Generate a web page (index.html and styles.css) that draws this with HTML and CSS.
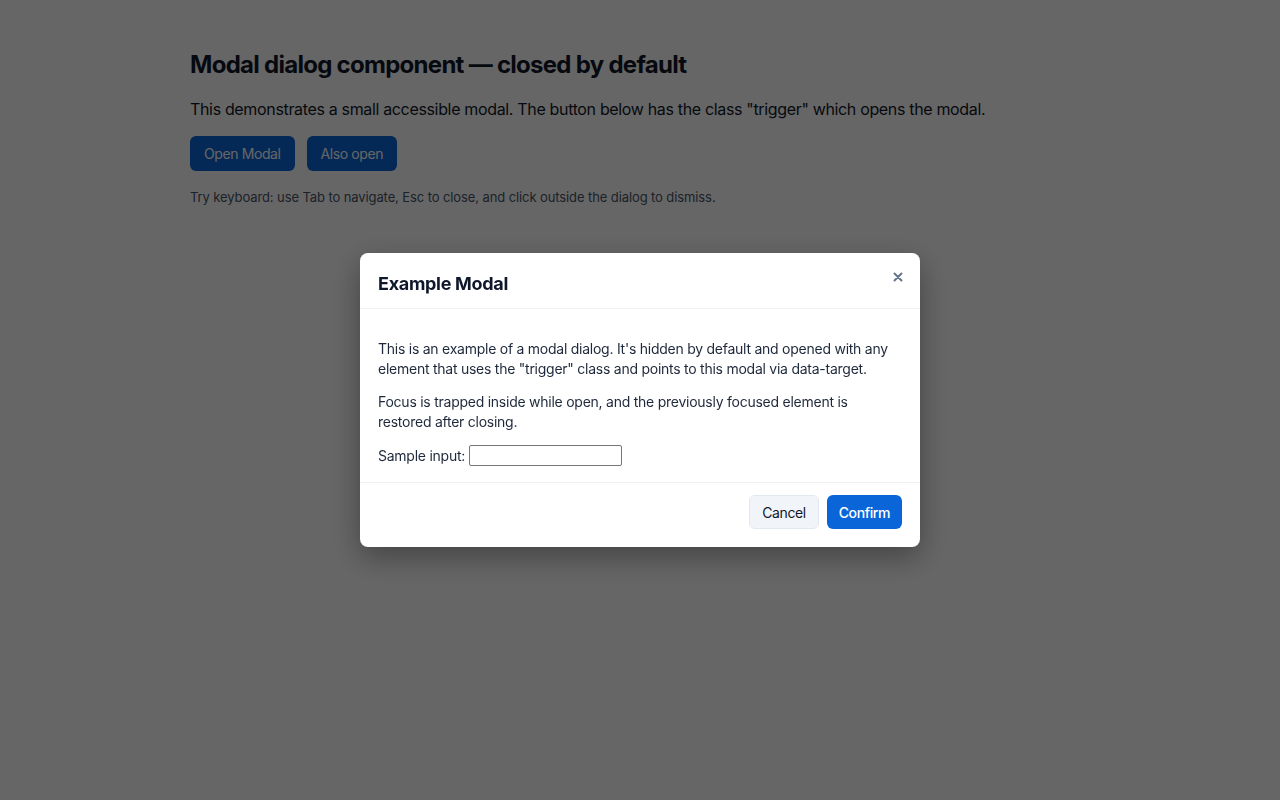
FILE: index.html
```html
<!DOCTYPE html>
<html lang="en">
<head>
<meta charset="utf-8">
<title>Modal dialog component</title>
<link rel="stylesheet" href="styles.css">
</head>
<body>
<main class="page">
  <h1 class="title">Modal dialog component — closed by default</h1>
  <p class="lead">This demonstrates a small accessible modal. The button below has the class "trigger" which opens the modal.</p>
  <div class="actions">
    <button class="btn btn-primary trigger" type="button">Open Modal</button>
    <button class="btn btn-primary trigger" type="button">Also open</button>
  </div>
  <p class="hint">Try keyboard: use Tab to navigate, Esc to close, and click outside the dialog to dismiss.</p>
</main>

<div class="overlay">
  <div class="modal" role="dialog" aria-modal="true" aria-labelledby="modal-title">
    <header class="modal-header">
      <h2 class="modal-title" id="modal-title">Example Modal</h2>
      <button class="close" type="button" aria-label="Close">
        <svg width="10" height="10" viewBox="0 0 10 10" aria-hidden="true"><path d="M1.5 1.5 L8.5 8.5 M8.5 1.5 L1.5 8.5" stroke="currentColor" stroke-width="2" stroke-linecap="round"/></svg>
      </button>
    </header>
    <div class="modal-body">
      <p>This is an example of a modal dialog. It's hidden by default and opened with any element that uses the "trigger" class and points to this modal via data-target.</p>
      <p>Focus is trapped inside while open, and the previously focused element is restored after closing.</p>
      <label class="field">Sample input: <input type="text" class="input"></label>
    </div>
    <footer class="modal-footer">
      <button class="btn btn-secondary" type="button">Cancel</button>
      <button class="btn btn-confirm" type="button">Confirm</button>
    </footer>
  </div>
</div>
</body>
</html>
```

FILE: styles.css
```css
html, body {
  margin: 0;
  padding: 0;
  height: 100%;
}

body {
  background: #ffffff;
  font-family: Inter, "Noto Sans", "Liberation Sans", sans-serif;
  color: #0f172a;
  letter-spacing: -0.02em;
}

.page {
  max-width: 900px;
  margin: 0 auto;
  padding-top: 50px;
}

.title {
  margin: 0;
  font-size: 24px;
  line-height: 29px;
  font-weight: 700;
  color: #0f172a;
  letter-spacing: -0.72px;
}

.lead {
  margin: 18px 0 0;
  font-size: 16px;
  line-height: 24px;
  color: #111827;
  letter-spacing: -0.34px;
}

.actions {
  display: flex;
  gap: 12px;
  margin-top: 15px;
}

.btn {
  font-family: inherit;
  font-size: 14px;
  line-height: 17px;
  border-radius: 6px;
  cursor: pointer;
  letter-spacing: -0.4px;
}

.btn-primary {
  background: #0a66d8;
  color: #ffffff;
  border: none;
  height: 35px;
  padding: 0 14px;
}

.hint {
  margin: 17px 0 0;
  font-size: 13px;
  line-height: 18px;
  color: #475569;
  letter-spacing: -0.1px;
}

.overlay {
  position: fixed;
  inset: 0;
  background: rgba(0, 0, 0, 0.6);
  display: flex;
  justify-content: center;
  align-items: flex-start;
  padding-top: 253px;
}

.modal {
  width: 560px;
  background: #ffffff;
  border-radius: 8px;
  box-shadow: 0 10px 30px rgba(0, 0, 0, 0.35);
  color: #1e293b;
}

.modal-header {
  display: flex;
  justify-content: space-between;
  align-items: flex-start;
  padding: 20px 12px 13px 18px;
  border-bottom: 1px solid #eef0f3;
}

.modal-title {
  margin: 0;
  font-size: 18px;
  line-height: 22px;
  font-weight: 700;
  color: #0f172a;
  letter-spacing: -0.3px;
}

.close {
  background: none;
  border: none;
  padding: 0;
  width: 20px;
  height: 20px;
  margin-top: -6px;
  display: flex;
  align-items: center;
  justify-content: center;
  color: #64748b;
  cursor: pointer;
}

.modal-body {
  padding: 17px 18px 16px;
  font-size: 14px;
  line-height: 20px;
  letter-spacing: -0.25px;
}

.modal-body p {
  margin: 13px 0;
}

.field {
  display: flex;
  align-items: center;
  gap: 4px;
  margin-top: 13px;
  color: #1e293b;
}

.input {
  width: 153px;
  height: 21px;
  box-sizing: border-box;
  border: 1px solid #767676;
  border-radius: 2px;
  padding: 1px 2px;
  font-family: inherit;
  font-size: 13px;
  margin: 0;
}

.modal-footer {
  display: flex;
  justify-content: flex-end;
  gap: 8px;
  padding: 12px 18px 18px;
  border-top: 1px solid #eef0f3;
}

.btn-secondary {
  height: 34px;
  padding: 0 12px;
  background: #f1f5f9;
  border: 1px solid #e2e8f0;
  color: #0f172a;
}

.btn-confirm {
  height: 34px;
  padding: 0 12px;
  background: #0a66d8;
  border: none;
  color: #ffffff;
  font-weight: 500;
}
```
